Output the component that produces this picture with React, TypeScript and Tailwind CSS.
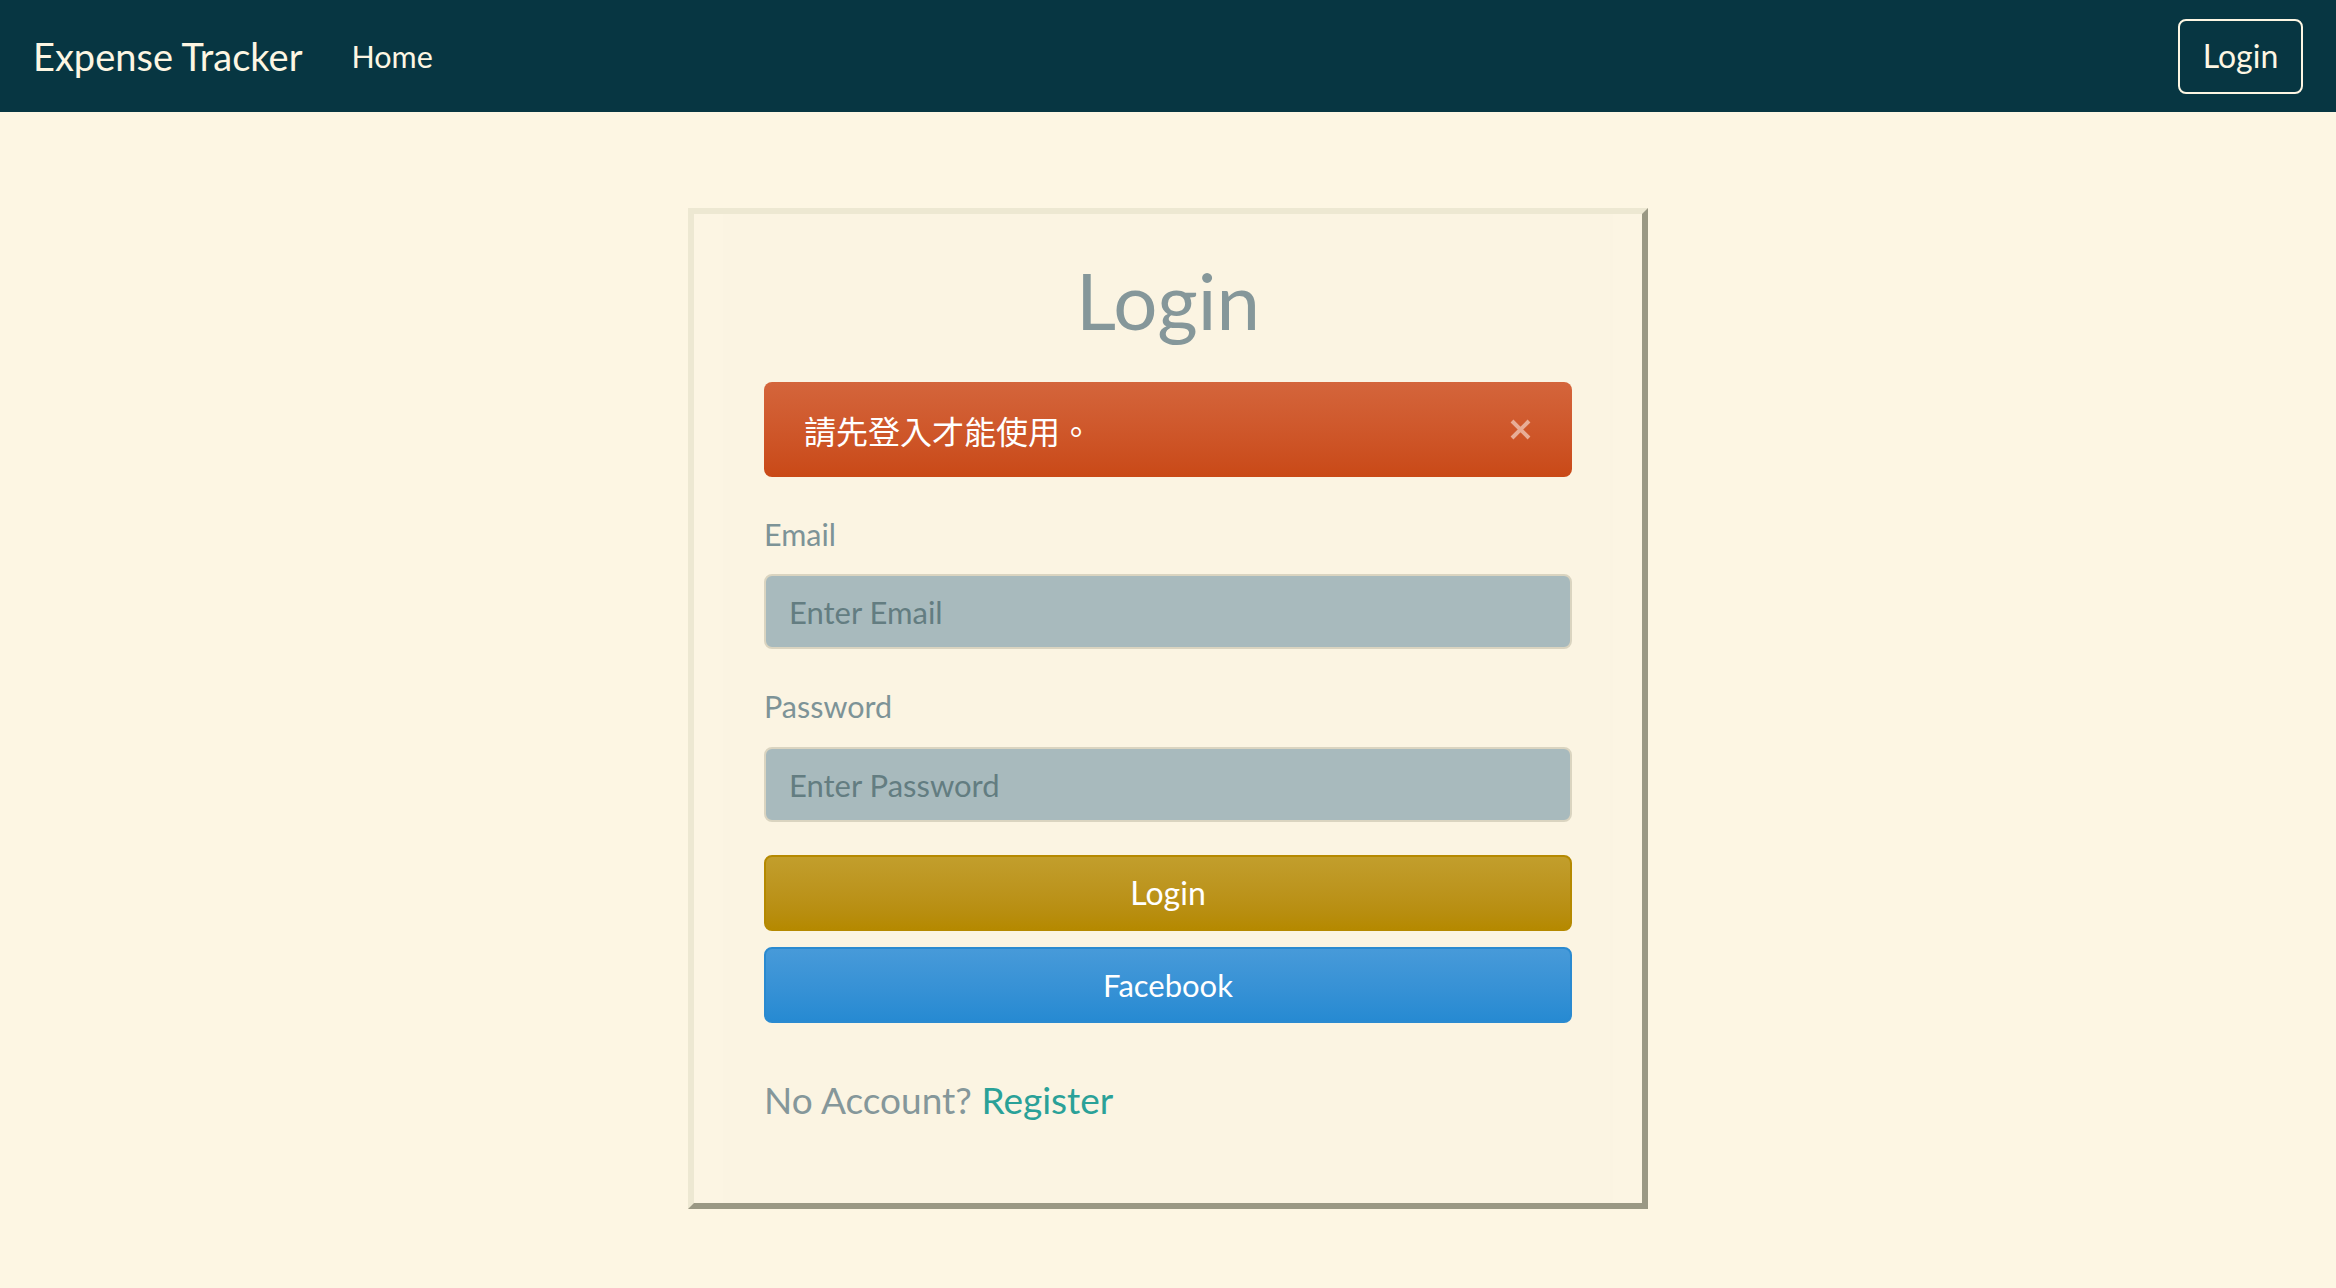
import React from "react";

const font = { fontFamily: '"Lato", "Noto Sans CJK TC", sans-serif' };

export default function App() {
  return (
    <div className="min-h-screen bg-[#fdf6e3]" style={font}>
      <nav className="h-[112px] bg-[#073642] flex items-center px-[33px]">
        <div className="text-[38px] leading-none text-[#fdf6e3]">Expense Tracker</div>
        <div className="ml-[49px] text-[30.5px] leading-none text-[#fdf6e3]">Home</div>
        <button className="ml-auto w-[125px] h-[75px] border-2 border-[#fdf6e3] rounded-[8px] text-[32px] leading-none text-[#fdf6e3] flex items-center justify-center">
          Login
        </button>
      </nav>

      <main className="pt-[96px] flex justify-center">
        <div className="w-[960px] border-[6px] border-t-[#ede8d2] border-l-[#ede8d2] border-r-[#9a9884] border-b-[#9a9884] bg-[#fcf5e3] px-[29px]">
          <div className="bg-[#fbf4e2] px-[41px] pb-[79px]">
            <h1 className="pt-[38px] text-[78px] leading-[96px] text-center text-[#85979a]">Login</h1>

            <div className="mt-[34px] h-[95px] rounded-[8px] bg-gradient-to-b from-[#d4653b] to-[#c94916] flex items-center justify-between pl-[40px] pr-[41px]">
              <span className="text-[32px] leading-none text-white" style={{ fontFamily: '"Noto Sans CJK TC", "Lato", sans-serif' }}>
                請先登入才能使用。
              </span>
              <svg width="21" height="21" viewBox="0 0 21 21" className="shrink-0">
                <path d="M2 2 L19 19 M19 2 L2 19" stroke="#e8ad96" strokeWidth="4" strokeLinecap="butt" />
              </svg>
            </div>

            <label className="block mt-[33px] text-[30.5px] leading-[48px] text-[#7d9397]">Email</label>
            <input
              className="block mt-[16px] w-full h-[75px] rounded-[8px] border-2 border-[#dad4c0] bg-[#a8babd] pl-[23px] text-[31px] text-[#3f5559] placeholder:text-[#637d81] outline-none"
              placeholder="Enter Email"
            />

            <label className="block mt-[33px] text-[30.5px] leading-[48px] text-[#7d9397]">Password</label>
            <input
              type="password"
              className="block mt-[17px] w-full h-[75px] rounded-[8px] border-2 border-[#dad4c0] bg-[#a8babd] pl-[23px] text-[31px] text-[#3f5559] placeholder:text-[#637d81] outline-none"
              placeholder="Enter Password"
            />

            <button className="mt-[33px] w-full h-[76px] rounded-[8px] border-2 border-[#b58900] bg-gradient-to-b from-[#c29e2c] to-[#b58900] text-[32px] leading-none text-white">
              Login
            </button>
            <button className="mt-[16px] w-full h-[76px] rounded-[8px] border-2 border-[#2a8ad0] bg-gradient-to-b from-[#479ad9] to-[#268ad2] text-[31px] leading-none text-white">
              Facebook
            </button>

            <div className="mt-[53px] text-[37px] leading-[48px] text-[#85979a]">
              No Account? <a className="text-[#2aa198]">Register</a>
            </div>
          </div>
        </div>
      </main>
    </div>
  );
}
